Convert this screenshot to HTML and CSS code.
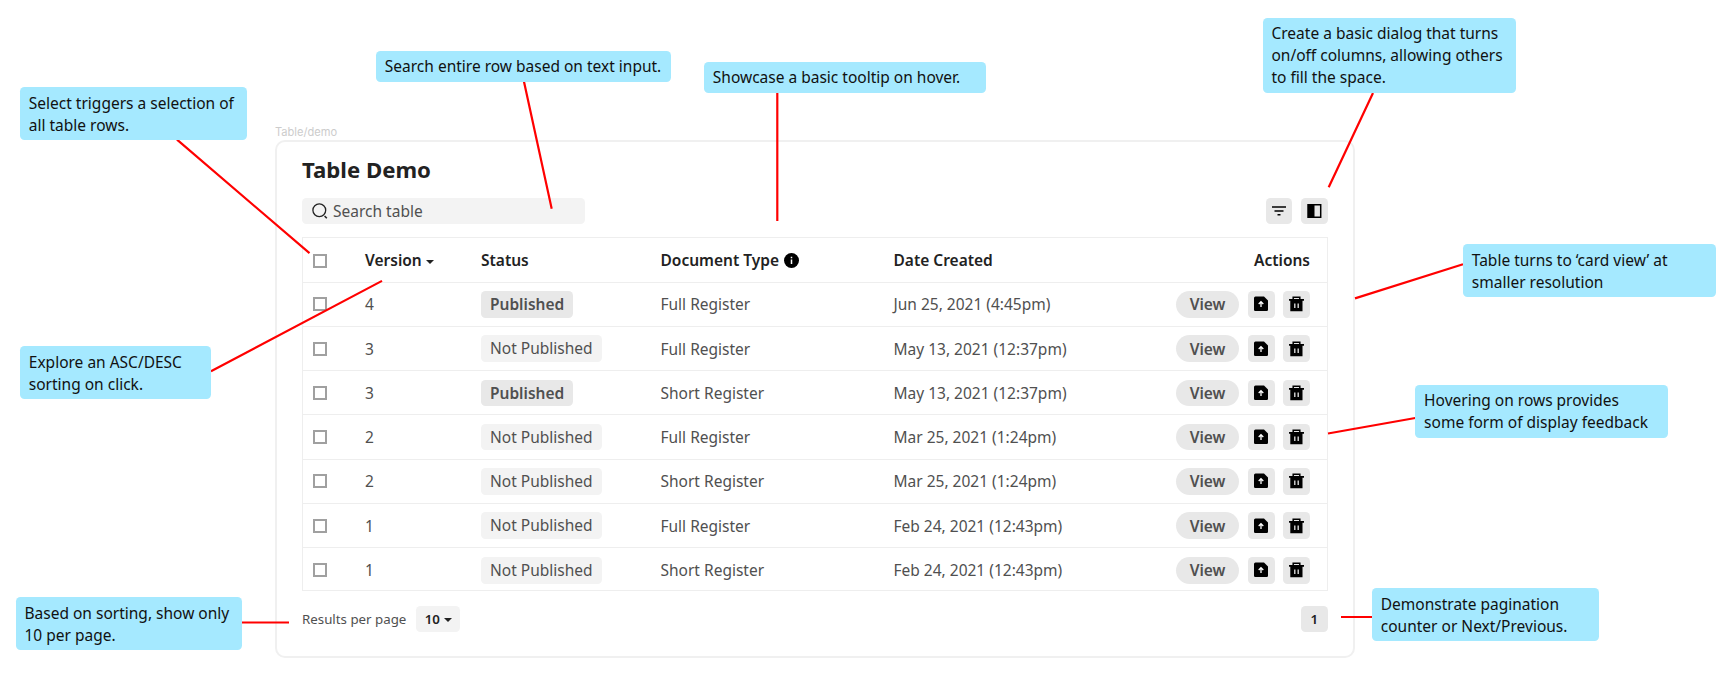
FILE: index.html
```html
<!DOCTYPE html>
<html lang="en">
<head>
<meta charset="utf-8">
<title>Table Demo</title>
<link rel="stylesheet" href="styles.css">
</head>
<body>
<svg class="symbols" aria-hidden="true">
  <symbol id="publish" viewBox="0 0 14 16"><path d="M1.500.500H10l4 4v9.300a1.300 1.300 0 0 1-1.300 1.300H1.300A1.300 1.300 0 0 1 0 13.800V2A1.500 1.500 0 0 1 1.500.500z"/><path d="M7 11V5.800M4.700 8L7 5.700l2.300 2.300" fill="none" stroke="#fff" stroke-width="1.300"/></symbol>
  <symbol id="trash" viewBox="0 0 15 16"><path d="M4.200 3.500V1.200h6.600v2.300" fill="none" stroke="#000" stroke-width="1.500"/><path d="M0 3h15v1.700H0zM1.300 4.400h12.200v10.800H1.300z"/><path d="M5.800 7.500v4.600M9.200 7.500v4.600" stroke="#e8e8e8" stroke-width="1.300"/></symbol>
</svg>
<main class="board">
  <div class="frame">
    <div class="frame-label">Table/demo</div>
    <section class="card">
      <h1 class="title">Table Demo</h1>
      <div class="toolbar">
        <label class="search">
          <svg class="search-icon" viewBox="0 0 16 16"><circle cx="7.300" cy="7.300" r="6.400" fill="none" stroke="#222" stroke-width="1.300"/><path d="M12.600 13l2.200 2.200" stroke="#222" stroke-width="1.600"/></svg>
          <span>Search table</span>
        </label>
        <div class="tools">
          <button class="icon-btn"><svg width="14" height="10" viewBox="0 0 14 10"><path d="M0 1h14M2.500 5h9M5.500 8.700h3" stroke="#000" stroke-width="1.600"/></svg></button>
          <button class="icon-btn"><svg width="15" height="14" viewBox="0 0 15 14"><path d="M1.300.800h12.400v12.400H1.300z" fill="none" stroke="#000" stroke-width="1.500"/><path d="M.5 0h7v14h-7z"/></svg></button>
        </div>
      </div>
      <div class="table" id="table">
        <div class="row head">
          <span class="box"></span>
          <span class="label">Version<i class="caret"></i></span>
          <span>Status</span>
          <span class="label">Document Type<svg class="info" viewBox="0 0 15 15"><circle cx="7.500" cy="7.500" r="7.500"/><path d="M7.500 6.500v4.500M7.500 3.700v1.500" stroke="#fff" stroke-width="1.500"/></svg></span>
          <span>Date Created</span>
          <span class="actions">Actions</span>
        </div>
      </div>
      <div class="footer">
        <div class="per-page">Results per page <button class="select">10<i class="caret"></i></button></div>
        <button class="icon-btn page">1</button>
      </div>
    </section>
  </div>

  <svg class="connectors" viewBox="0 0 1734 682">
    <path d="M177 139.700L309.500 253.200M524 81.700L551.700 208.700M777.300 92.500V221M1373 93L1328.700 187.300M1463 264.200L1355 298.400M1415.300 418L1328 433.500M211 371.300L382 280.900M242 622.500H289M1341 617H1372"/>
  </svg>
  <aside class="note n-select">Select triggers a selection of<br>all table rows.</aside>
  <aside class="note n-search">Search entire row based on text input.</aside>
  <aside class="note n-tooltip">Showcase a basic tooltip on hover.</aside>
  <aside class="note n-dialog">Create a basic dialog that turns<br>on/off columns, allowing others<br>to fill the space.</aside>
  <aside class="note n-cards">Table turns to ‘card view’ at<br>smaller resolution</aside>
  <aside class="note n-hover">Hovering on rows provides<br>some form of display feedback</aside>
  <aside class="note n-sort">Explore an ASC/DESC<br>sorting on click.</aside>
  <aside class="note n-limit">Based on sorting, show only<br>10 per page.</aside>
  <aside class="note n-pages">Demonstrate pagination<br>counter or Next/Previous.</aside>
</main>
<script src="table.js"></script>
</body>
</html>
```

FILE: styles.css
```css
* { box-sizing: border-box; }
body { margin: 0; background: #fff; font-family: "Noto Sans", sans-serif; font-size: 15.5px; color: #505050; }
button { font: inherit; border: 0; padding: 0; margin: 0; color: inherit; }
.symbols { display: none; }
.board { position: relative; width: 1734px; height: 682px; overflow: hidden; }
.frame { padding: 124px 0 0 275px; width: 1355px; }
.frame-label { font: 11.100px/17px Inter, sans-serif; height: 16px; color: #ccc; }
.card { height: 518px; border: 2px solid #f0f0f0; border-radius: 10px; padding: 12.500px 25.500px 0 25px; }
.title { margin: 0; font-size: 22.200px; line-height: 30px; font-weight: 700; color: #222; }
.toolbar { display: flex; justify-content: space-between; margin-top: 13.400px; }
.search { display: flex; align-items: center; gap: 5.500px; width: 283px; height: 26.500px; padding-left: 9.500px; border-radius: 4.500px; background: #f3f3f3; }
.search-icon { width: 16px; height: 16px; }
.tools { display: flex; gap: 8.700px; }
.icon-btn { display: flex; align-items: center; justify-content: center; width: 26.600px; height: 26.500px; border-radius: 4.500px; background: #e8e8e8; }
.table { margin-top: 13px; height: 354px; border: 1px solid #eee; }
.row { display: grid; grid-template-columns: 52.500px 116px 179.500px 233px 1fr auto; align-items: center; height: 44.250px; padding: 0 16.500px 0 9.500px; border-bottom: 1px solid #eee; }
.row:last-child { border-bottom: 0; }
.head { font-weight: 600; color: #222; }
.box { width: 14px; height: 14px; border: 2px solid #a0a0a0; }
.head .box { position: relative; top: 1px; }
.label { display: flex; align-items: center; }
.caret { width: 0; height: 0; border: 4.700px solid transparent; border-top-color: #222; border-bottom: 0; margin-left: 4px; margin-top: 3px; }
.info { width: 15px; height: 15px; margin-left: 5px; }
.badge { display: inline-block; height: 26.500px; line-height: 26px; padding: 0 9px; border-radius: 4.500px; background: #f3f3f3; }
.badge.on { background: #e8e8e8; font-weight: 600; }
.actions { display: flex; align-items: center; gap: 8.900px; }
.view { height: 26.500px; line-height: 26px; width: 63px; border-radius: 14px; background: #e8e8e8; font-weight: 600; }
.footer { display: flex; justify-content: space-between; margin-top: 14.300px; font-size: 13.300px; }
.per-page { display: flex; align-items: center; gap: 10px; }
.select { display: flex; align-items: center; justify-content: center; width: 44px; height: 26.500px; border-radius: 4.500px; background: #f3f3f3; color: #222; font-weight: 600; }
.page { color: #222; font-weight: 600; }
.connectors { position: absolute; inset: 0; width: 1734px; height: 682px; fill: none; stroke: #f00; stroke-width: 2.200; }
.note { position: absolute; padding: 4.400px 8.800px; line-height: 22.150px; border-radius: 4.500px; background: #a5e9ff; color: #111; white-space: nowrap; }
.n-select { left: 20px; top: 87.300px; width: 227px; }
.n-search { left: 376px; top: 50.700px; width: 295px; }
.n-tooltip { left: 704px; top: 61.900px; width: 282px; }
.n-dialog { left: 1262.700px; top: 17.500px; width: 253px; }
.n-cards { left: 1463px; top: 244.300px; width: 253px; }
.n-hover { left: 1415.300px; top: 384.500px; width: 253px; }
.n-sort { left: 20px; top: 346.300px; width: 191px; }
.n-limit { left: 15.700px; top: 597.300px; width: 226.500px; }
.n-pages { left: 1372px; top: 588.300px; width: 227px; }
```

FILE: table.js
```js
const rows = [
  [4, true, "Full Register", "Jun 25, 2021 (4:45pm)"],
  [3, false, "Full Register", "May 13, 2021 (12:37pm)"],
  [3, true, "Short Register", "May 13, 2021 (12:37pm)"],
  [2, false, "Full Register", "Mar 25, 2021 (1:24pm)"],
  [2, false, "Short Register", "Mar 25, 2021 (1:24pm)"],
  [1, false, "Full Register", "Feb 24, 2021 (12:43pm)"],
  [1, false, "Short Register", "Feb 24, 2021 (12:43pm)"]
];
document.getElementById("table").insertAdjacentHTML("beforeend", rows.map(([version, published, type, date]) => `
  <div class="row">
    <span class="box"></span>
    <span>${version}</span>
    <span><span class="badge ${published ? "on" : ""}">${published ? "Published" : "Not Published"}</span></span>
    <span>${type}</span>
    <span>${date}</span>
    <span class="actions">
      <button class="view">View</button>
      <button class="icon-btn"><svg width="14" height="16"><use href="#publish"/></svg></button>
      <button class="icon-btn"><svg width="15" height="16"><use href="#trash"/></svg></button>
    </span>
  </div>`).join(""));
```
